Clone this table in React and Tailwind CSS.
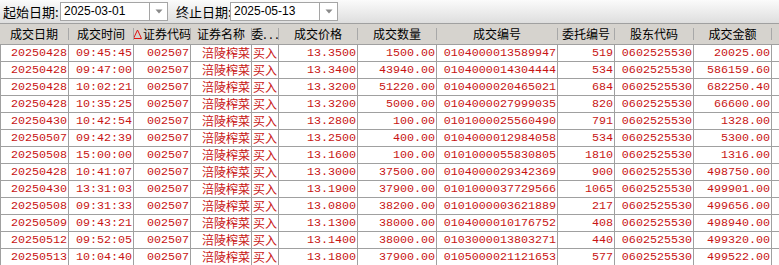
import React from 'react';

// Trade query window: date range toolbar + trade records grid
const columns = [
  { key: 'date', label: '成交日期', w: 'w-[69px]', edge: true },
  { key: 'time', label: '成交时间', w: 'w-[65px]' },
  { key: 'code', label: '证券代码', w: 'w-[57px]', sorted: true },
  { key: 'name', label: '证券名称', w: 'w-[61px]', cjk: true },
  { key: 'side', label: '委. . .', w: 'w-[27px]', cjk: true },
  { key: 'price', label: '成交价格', w: 'w-[79px]' },
  { key: 'qty', label: '成交数量', w: 'w-[79px]' },
  { key: 'dealNo', label: '成交编号', w: 'w-[121px]' },
  { key: 'orderNo', label: '委托编号', w: 'w-[57px]' },
  { key: 'holder', label: '股东代码', w: 'w-[79px]' },
  { key: 'amount', label: '成交金额', w: 'w-[78px]' },
];

const raw = [
  ['20250428', '09:45:45', '13.3500', '1500.00', '0104000013589947', '519', '20025.00'],
  ['20250428', '09:47:00', '13.3400', '43940.00', '0104000014304444', '534', '586159.60'],
  ['20250428', '10:02:21', '13.3200', '51220.00', '0104000020465021', '684', '682250.40'],
  ['20250428', '10:35:25', '13.3200', '5000.00', '0104000027999035', '820', '66600.00'],
  ['20250430', '10:42:54', '13.2800', '100.00', '0101000025560490', '791', '1328.00'],
  ['20250507', '09:42:39', '13.2500', '400.00', '0104000012984058', '534', '5300.00'],
  ['20250508', '15:00:00', '13.1600', '100.00', '0101000055830805', '1810', '1316.00'],
  ['20250428', '10:41:07', '13.3000', '37500.00', '0104000029342369', '900', '498750.00'],
  ['20250430', '13:31:03', '13.1900', '37900.00', '0101000037729566', '1065', '499901.00'],
  ['20250508', '09:31:33', '13.0800', '38200.00', '0101000003621889', '217', '499656.00'],
  ['20250509', '09:43:21', '13.1300', '38000.00', '0104000010176752', '408', '498940.00'],
  ['20250512', '09:52:05', '13.1400', '38000.00', '0103000013803271', '440', '499320.00'],
  ['20250513', '10:04:40', '13.1800', '37900.00', '0105000021121653', '577', '499522.00'],
];

const rows = raw.map(([date, time, price, qty, dealNo, orderNo, amount]) => ({
  date,
  time,
  code: '002507',
  name: '涪陵榨菜',
  side: '买入',
  price,
  qty,
  dealNo,
  orderNo,
  holder: '0602525530',
  amount,
}));

const DateBox = ({ value }) => (
  <div className="flex h-[19px] w-[108px] shrink-0 border border-[#a5a5a5] bg-white">
    <div className="flex flex-1 items-center pl-[3px] text-[12px] leading-[17px] text-black [font-family:'Liberation_Sans',sans-serif]">
      {value}
    </div>
    <div className="flex w-[18px] items-center justify-center border-l border-l-[#a5a5a5]">
      <svg width="8" height="5" viewBox="0 0 8 5">
        <polygon points="0.5,0.5 7.5,0.5 4,4.5" fill="#8a8a8a" />
      </svg>
    </div>
  </div>
);

const SortMark = () => (
  <svg width="9" height="10" viewBox="0 0 9 10" className="mr-[1px] shrink-0">
    <polygon points="4.5,1 8.5,9.5 0.5,9.5" fill="none" stroke="#e01010" strokeWidth="1" />
  </svg>
);

export default function App() {
  return (
    <div className="h-[265px] w-[779px] overflow-hidden bg-white">
      {/* Toolbar */}
      <div className="flex h-[24px] items-center border-b border-b-[#a0a0a0] bg-gradient-to-b from-[#fbfbfb] to-[#dedede] pl-[3px] [font-family:'Noto_Sans_CJK_SC',sans-serif]">
        <span className="w-[57px] shrink-0 whitespace-nowrap text-[13px] leading-[18px] text-black">起始日期:</span>
        <DateBox value="2025-03-01" />
        <span className="ml-[8px] w-[54px] shrink-0 whitespace-nowrap text-[13px] leading-[18px] text-black">终止日期:</span>
        <DateBox value="2025-05-13" />
      </div>

      {/* Header */}
      <div className="flex h-[21px] border-b border-b-[#a0a0a0] bg-[#d6d3ce] [font-family:'Noto_Sans_CJK_SC',sans-serif]">
        {columns.map((c) => (
          <div key={c.key} className={`flex shrink-0 items-center ${c.w}`}>
            <div className="flex flex-1 items-center justify-center overflow-hidden whitespace-nowrap text-[12px] leading-[18px] text-black">
              {c.sorted && <SortMark />}
              {c.label}
            </div>
            <div className="h-[12px] w-px bg-[#a8a8a8]" />
          </div>
        ))}
        <div className="flex-1" />
      </div>

      {/* Rows */}
      {rows.map((r, i) => (
        <div key={i} className="flex h-[17px] border-b border-b-[#a0a0a0] bg-white">
          {columns.map((c) => (
            <div
              key={c.key}
              className={`flex shrink-0 items-center justify-end whitespace-nowrap border-r border-r-[#a0a0a0] text-[#c81414] ${c.w} ${
                c.edge ? 'border-l border-l-[#a0a0a0]' : ''
              } ${
                c.cjk
                  ? "pr-px text-[12px] leading-[16px] [font-family:'Noto_Sans_CJK_SC',sans-serif]"
                  : "pr-px text-[11.7px] leading-[16px] [font-family:'Liberation_Mono',monospace]"
              }`}
            >
              {r[c.key]}
            </div>
          ))}
          <div className="flex-1" />
        </div>
      ))}
    </div>
  );
}
